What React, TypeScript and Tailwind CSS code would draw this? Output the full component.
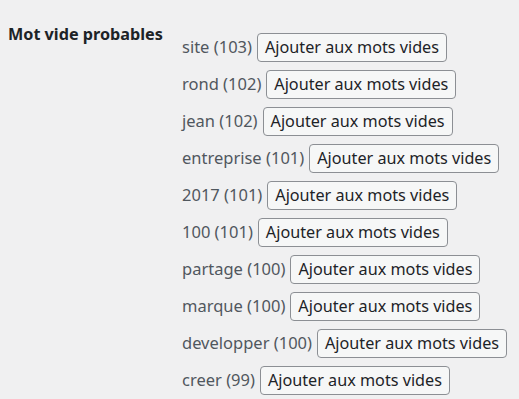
import React from "react";

const words: [string, number][] = [
  ["site", 103],
  ["rond", 102],
  ["jean", 102],
  ["entreprise", 101],
  ["2017", 101],
  ["100", 101],
  ["partage", 100],
  ["marque", 100],
  ["developper", 100],
  ["creer", 99],
];

export default function App() {
  return (
    <div
      className="min-h-screen w-full bg-[#f0f0f1] flex items-start"
      style={{ fontFamily: '"Noto Sans", "Open Sans", sans-serif' }}
    >
      <div className="w-[182px] shrink-0 pl-2 pt-[22px] text-[16.2px] font-bold text-[#1d2327]">
        Mot vide probables
      </div>
      <div className="flex flex-col gap-2 pt-[33px]">
        {words.map(([w, n]) => (
          <div key={w} className="flex items-center gap-[5px] h-[29px]">
            <span className="text-[16.5px] text-[#50575e]">
              {w} ({n})
            </span>
            <button className="h-[29px] px-[7px] rounded-[4px] border border-[#8c8f94] bg-[#f6f7f7] text-[16.2px] text-[#1d2327] leading-none">
              Ajouter aux mots vides
            </button>
          </div>
        ))}
      </div>
    </div>
  );
}
